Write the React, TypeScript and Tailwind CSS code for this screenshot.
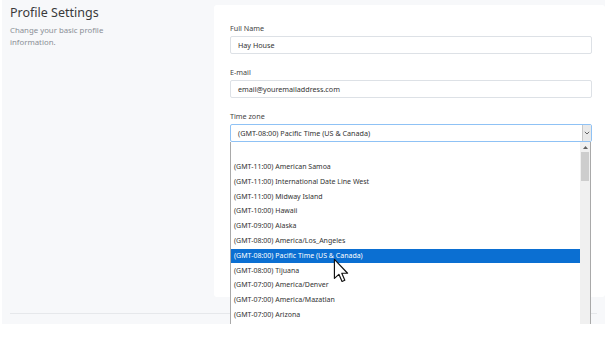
import React from 'react';

const zones = [
  '',
  '(GMT-11:00) American Samoa',
  '(GMT-11:00) International Date Line West',
  '(GMT-11:00) Midway Island',
  '(GMT-10:00) Hawaii',
  '(GMT-09:00) Alaska',
  '(GMT-08:00) America/Los_Angeles',
  '(GMT-08:00) Pacific Time (US & Canada)',
  '(GMT-08:00) Tijuana',
  '(GMT-07:00) America/Denver',
  '(GMT-07:00) America/Mazatlan',
  '(GMT-07:00) Arizona',
];

const selected = '(GMT-08:00) Pacific Time (US & Canada)';

const Field = ({ label, value }: { label: string; value: string }) => (
  <div className="mb-[14px]">
    <div className="h-[9px] text-[7.2px] leading-[9px] text-[#444] mb-[3px]">{label}</div>
    <div className="h-[18px] border border-[#dde1e6] rounded-[2px] px-[7px] flex items-center text-[7.2px] text-[#333]">
      {value}
    </div>
  </div>
);

const Cursor = () => (
  <svg width="16" height="25" viewBox="0 0 12 19" className="absolute left-[331px] top-[258px]">
    <path
      d="M1 1 L1 15.5 L4.4 12.4 L6.8 17.8 L8.9 16.9 L6.6 11.6 L11 11.6 Z"
      fill="#fff"
      stroke="#111"
      strokeWidth="0.9"
      strokeLinejoin="round"
    />
  </svg>
);

export default function App() {
  return (
    <div className="w-[609px] h-[345px] bg-white" style={{ fontFamily: '"Noto Sans", "Open Sans", sans-serif' }}>
      <div className="relative h-[324px] ml-[2px] mr-[4px] bg-[#f7f8fa] overflow-hidden">
        <div className="flex pt-[5px] pb-[16px] mx-[8px] border-b border-[#e6e8eb]">
          <div className="w-[204px]">
            <h1 className="text-[12.5px] leading-[16px] text-[#3a3a3a]">Profile Settings</h1>
            <p className="text-[7.8px] leading-[12px] text-[#8a8f96] mt-[3px] w-[104px]">
              Change your basic profile information.
            </p>
          </div>
          <div className="flex-1 -mr-[8px] bg-white rounded-[3px] h-[292px] pt-[19px] px-[16px] pr-[13px]">
            <Field label="Full Name" value="Hay House" />
            <Field label="E-mail" value="email@youremailaddress.com" />
            <div>
              <div className="h-[9px] text-[7.2px] leading-[9px] text-[#444] mb-[3px]">Time zone</div>
              <div className="h-[18px] border border-[#8fc2f5] rounded-[2px] flex items-center text-[7.2px] text-[#333]">
                <span className="flex-1 pl-[7px]">(GMT-08:00) Pacific Time (US &amp; Canada)</span>
                <span className="w-[9px] h-full bg-[#e9e9e9] border-l border-[#c8c8c8] flex items-center justify-center">
                  <svg width="6" height="4" viewBox="0 0 6 4">
                    <path d="M0.8 0.8 L3 3 L5.2 0.8" fill="none" stroke="#555" strokeWidth="0.9" />
                  </svg>
                </span>
              </div>
            </div>
          </div>
        </div>

        <div className="absolute left-[228px] top-[142px] w-[361px] h-[190px] bg-white border-l border-r border-[#a9a9a9] flex">
          <div className="flex-1 pt-[3px]">
            {zones.map((z, i) => (
              <div
                key={i}
                className={`h-[14.8px] pl-[3px] flex items-center text-[7px] whitespace-nowrap ${
                  z === selected ? 'bg-[#0b6fd2] text-white' : 'text-[#333]'
                }`}
              >
                {z}
              </div>
            ))}
          </div>
          <div className="w-[10px] bg-[#f0f0f0] flex flex-col items-center">
            <div className="h-[10px] flex items-center justify-center">
              <svg width="5" height="3" viewBox="0 0 5 3">
                <path d="M0 3 L2.5 0 L5 3 Z" fill="#606060" />
              </svg>
            </div>
            <div className="w-[8px] h-[29px] bg-[#cdcdcd]" />
          </div>
        </div>

        <Cursor />
      </div>
    </div>
  );
}
